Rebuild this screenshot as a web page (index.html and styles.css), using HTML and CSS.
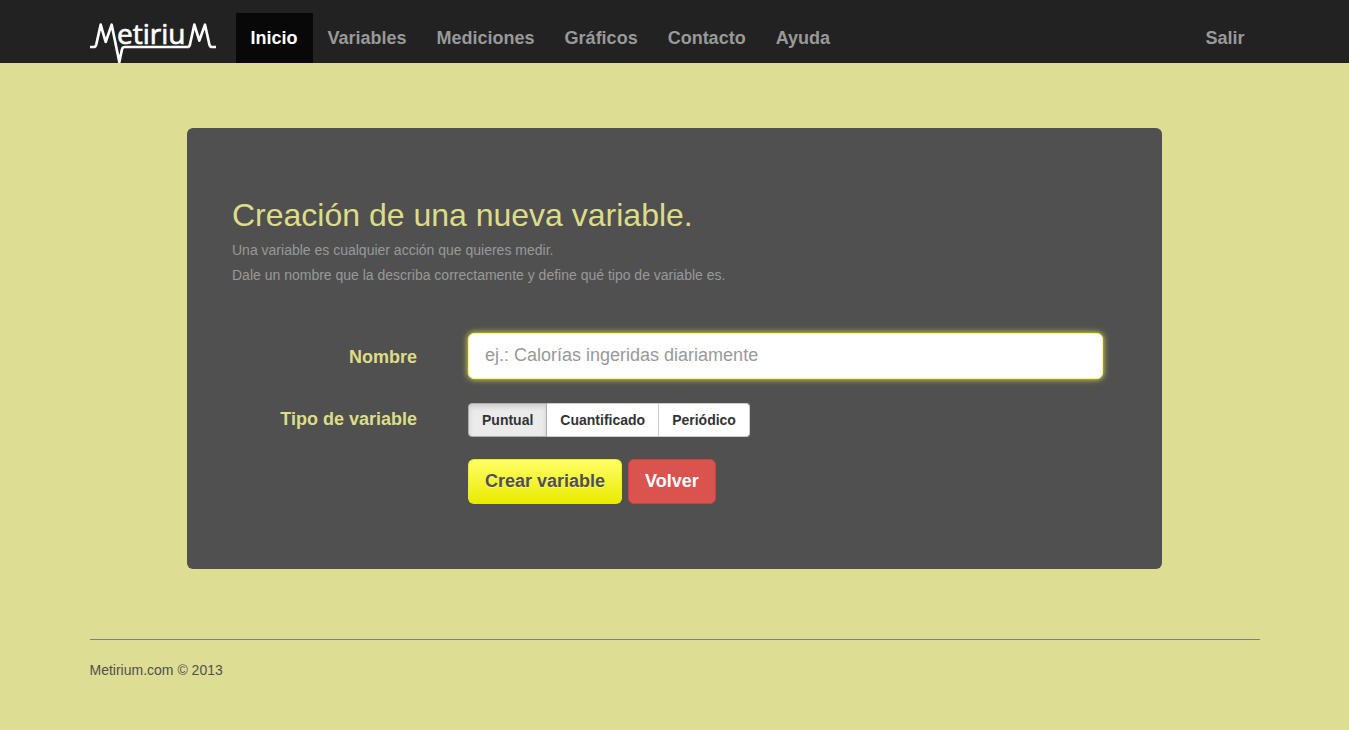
FILE: index.html
```html
<!DOCTYPE html>
<html lang="es">
<head>
<meta charset="utf-8">
<meta name="viewport" content="width=device-width, initial-scale=1">
<title>Metirium</title>
<link rel="stylesheet" href="styles.css">
</head>
<body>
<header class="navbar">
  <div class="container navbar-inner">
    <a class="brand" href="#" aria-label="Metirium">
      <svg class="logo" viewBox="30 0 378 189" role="img" aria-hidden="true">
        <path class="pulse" d="M30 141H41Q47 141 49 133L62 74L77 126L95 74L118 186L126 148Q128 141 134 141H322Q328 141 330 133L343 74L358 122L375 74L388 133Q390 141 396 141H408"/>
        <text class="logo-text" x="111" y="131">etiriu</text>
      </svg>
    </a>
    <nav class="nav">
      <a class="nav-link active" href="#">Inicio</a>
      <a class="nav-link" href="#">Variables</a>
      <a class="nav-link" href="#">Mediciones</a>
      <a class="nav-link" href="#">Gráficos</a>
      <a class="nav-link" href="#">Contacto</a>
      <a class="nav-link" href="#">Ayuda</a>
      <a class="nav-link nav-end" href="#">Salir</a>
    </nav>
  </div>
</header>
<main class="container">
  <section class="panel">
    <h1 class="title">Creación de una nueva variable.</h1>
    <p class="help">Una variable es cualquier acción que quieres medir.<br>Dale un nombre que la describa correctamente y define qué tipo de variable es.</p>
    <form class="form">
      <label class="form-label" for="nombre">Nombre</label>
      <input class="text-input" id="nombre" type="text" placeholder="ej.: Calorías ingeridas diariamente">
      <span class="form-label form-label-group" id="tipo">Tipo de variable</span>
      <div class="segmented" role="radiogroup" aria-labelledby="tipo">
        <label class="segment"><input class="segment-radio" type="radio" name="tipo" checked>Puntual</label>
        <label class="segment"><input class="segment-radio" type="radio" name="tipo">Cuantificado</label>
        <label class="segment"><input class="segment-radio" type="radio" name="tipo">Periódico</label>
      </div>
      <div class="actions">
        <button class="button button-create" type="submit">Crear variable</button>
        <button class="button button-back" type="button">Volver</button>
      </div>
    </form>
  </section>
  <footer class="footer">Metirium.com © 2013</footer>
</main>
</body>
</html>
```
FILE: styles.css
```css
* { box-sizing: border-box; }
body {
  margin: 0;
  background: #dddd94;
  color: #505050;
  font: 14px/20px "Liberation Sans", Arial, sans-serif;
}
.container {
  max-width: 1170px;
  margin: 0 auto;
}
.navbar { background: #222; }
.navbar-inner { display: flex; }
.brand { margin-right: 20px; }
.logo {
  display: block;
  width: 126px;
  height: 63px;
}
.pulse {
  fill: none;
  stroke: #fff;
  stroke-width: 8;
  stroke-linejoin: round;
}
.logo-text {
  fill: #fff;
  stroke: #fff;
  stroke-width: 2;
  font: 84px "Open Sans", sans-serif;
}
.nav {
  display: flex;
  flex: 1;
  padding-top: 13px;
}
.nav-link {
  padding: 15px;
  color: #999;
  font-size: 18px;
  font-weight: bold;
  line-height: 20px;
  text-decoration: none;
}
.nav-link.active {
  background: #080808;
  color: #fff;
}
.nav-end { margin-left: auto; }
.panel {
  width: 83.333%;
  margin: 65px auto 0;
  padding: 69px 59px 65px 45px;
  border-radius: 6px;
  background: #505050;
}
.title {
  margin: 0;
  color: #dddd88;
  font-size: 32px;
  font-weight: normal;
  line-height: 36px;
}
.help {
  margin: 5px 0 45px;
  color: #999;
  line-height: 25px;
}
.form {
  display: grid;
  grid-template-columns: 185px 1fr;
  column-gap: 51px;
}
.form-label {
  padding-top: 14px;
  color: #dddd88;
  font-size: 18px;
  font-weight: bold;
  text-align: right;
}
.form-label-group { padding-top: 30px; }
.text-input {
  width: 100%;
  height: 46px;
  padding: 10px 16px 12px;
  border: 1px solid #ffff66;
  border-radius: 6px;
  outline: 0;
  background: #fff;
  box-shadow: 0 0 6px #eeee55;
  color: #555;
  font: inherit;
  font-size: 18px;
}
.text-input::placeholder { color: #999; opacity: 1; }
.segmented {
  display: flex;
  margin: 24px 0 22px;
}
.segment {
  height: 34px;
  padding: 6px 13px;
  border: 1px solid #ccc;
  border-left-width: 0;
  background: #fff;
  color: #333;
  font-weight: bold;
}
.segment:first-child {
  border-left-width: 1px;
  border-radius: 4px 0 0 4px;
}
.segment:last-child { border-radius: 0 4px 4px 0; }
.segment:has(:checked) {
  border-color: #adadad;
  background: #ebebeb;
  box-shadow: inset 0 3px 5px rgba(0, 0, 0, 0.125);
}
.segment-radio {
  position: absolute;
  margin: 0;
  opacity: 0;
  pointer-events: none;
}
.actions {
  display: flex;
  grid-column: 2;
  gap: 6px;
}
.button {
  height: 45px;
  padding: 0 16px 2px;
  border: 1px solid;
  border-radius: 6px;
  font: bold 18px/24px "Liberation Sans", Arial, sans-serif;
}
.button-create {
  border-color: #eaea22 #eeee22 #eaea00;
  background: linear-gradient(#ffff66, #eaea00);
  color: #505050;
  text-shadow: 0 1px 1px rgba(255, 255, 255, 0.5);
}
.button-back {
  border-color: #d43f3a;
  background: #d9534f;
  color: #fff;
}
.footer {
  margin-top: 70px;
  padding: 20px 0;
  border-top: 1px solid #808080;
}
```
